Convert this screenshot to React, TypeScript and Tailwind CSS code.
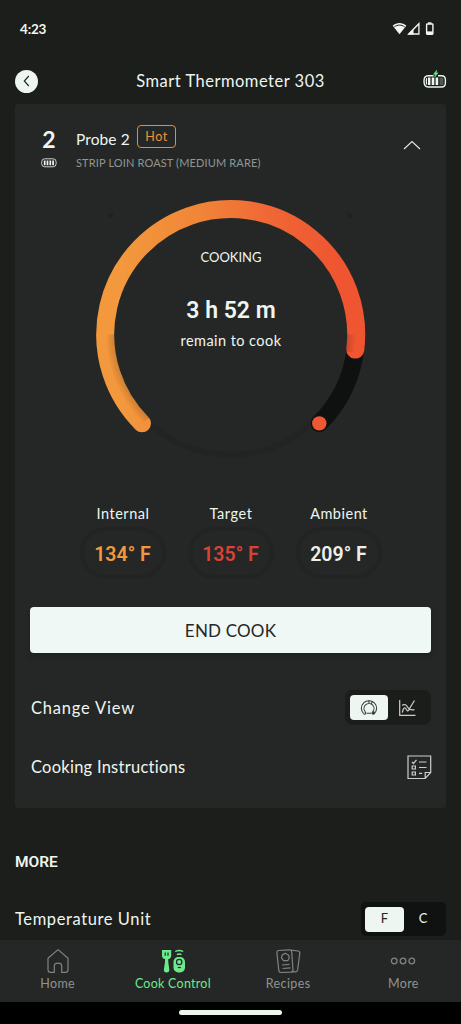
import type { ReactNode } from 'react'

type ReadingProps = {
  label: string
  value: string
  labelClass: string
  valueClass: string
}

type NavItemProps = {
  label: string
  labelClass: string
  children: ReactNode
}

function StatusIcons() {
  return (
    <svg width="44" height="16" viewBox="0 0 44 16" fill="none">
      <path d="M.7 4.800C4.700 1 10.300 1 14.300 4.800L7.500 13.200Z" fill="#f1f8f3" />
      <path d="M2.300 5.900C5.500 3.500 9.500 3.500 12.700 5.900" stroke="#1c1e1b" strokeWidth="1" />
      <path d="M16.700 13 26.900 2.700V13Z" stroke="#f1f8f3" strokeWidth="1.300" />
      <path d="M16 13.600 21.500 8V13.600Z" fill="#f1f8f3" />
      <path d="M36 1.300h3.500v1.500H36z" fill="#f1f8f3" />
      <rect x="34.600" y="3" width="6.300" height="10.300" rx=".7" stroke="#f1f8f3" strokeWidth="1.400" />
      <path d="M34.600 10.400h6.300v3h-6.300z" fill="#f1f8f3" />
    </svg>
  )
}

function ChargingIcon() {
  return (
    <svg width="24" height="19" viewBox="0 0 24 19" fill="none">
      <path d="M10.500 5.700H5.200Q1 5.700 1 11.300T5.200 17H18.500Q22.400 17 22.400 13V9.700Q22.400 5.700 18.500 5.700H15" stroke="#edf6f1" strokeWidth="1.400" />
      <path d="M3.700 8.200Q2.700 11.300 3.700 14.500" stroke="#edf6f1" strokeWidth="1.200" />
      <path d="M5 7.600h2.400v7.500H5zM8.700 7.600h2.600v7.500H8.700zM12.600 7.600h2.600v7.500h-2.600z" fill="#edf6f1" />
      <path d="M16.500 7.600h4v7.500h-4z" fill="#535955" />
      <path d="M13.700.2 10.600 4.300h1.900L11.600 7l3.400-4.100H13z" fill="#6de98d" stroke="#6de98d" strokeWidth=".6" />
    </svg>
  )
}

function BatteryIcon() {
  return (
    <svg width="16" height="10" viewBox="0 0 16 10" fill="none">
      <rect x=".7" y=".8" width="14.400" height="8" rx="3" stroke="#c9d1cc" strokeWidth="1" />
      <path d="M3.700 2.400v4.900M6.500 2.400v4.900M9.300 2.400v4.900M12.100 2.400v4.900" stroke="#edf6f1" strokeWidth="1.700" />
    </svg>
  )
}

function Gauge() {
  return (
    <svg className="col-start-1 row-start-1" width="276" height="264" viewBox="93 197 276 264" fill="none">
      <defs>
        <linearGradient id="heat" gradientUnits="userSpaceOnUse" x1="96" y1="0" x2="365" y2="0">
          <stop offset=".1" stopColor="#f3983c" />
          <stop offset=".38" stopColor="#f08638" />
          <stop offset=".65" stopColor="#f06635" />
          <stop offset=".9" stopColor="#ee5530" />
        </linearGradient>
        <radialGradient id="shade" gradientUnits="userSpaceOnUse" cx="230.700" cy="334.500" r="125">
          <stop offset=".932" stopColor="#000" stopOpacity=".15" />
          <stop offset="1" stopColor="#000" stopOpacity="0" />
        </radialGradient>
      </defs>
      <path d="M108 215.500 113 211.500Q114 217.500 108 217.500ZM353 215.500 348 211.500Q346 217.500 352 217.500Z" fill="#1f2120" />
      <path d="M144 418A120 120 0 0 0 317.400 418" stroke="#222423" strokeWidth="6" />
      <path d="M355.300 349.600A125.500 125.500 0 0 1 319.400 423.300" stroke="#0f1110" strokeWidth="17.500" strokeLinecap="round" />
      <path d="M142 423.300A125.500 125.500 0 1 1 355.300 349.600" stroke="url(#heat)" strokeWidth="18" strokeLinecap="round" />
      <path d="M110 334.500A120.700 120.700 0 0 0 146.500 420.500" stroke="url(#shade)" strokeWidth="8" />
      <path d="M351.200 334.500Q351.300 343 350.200 352" stroke="url(#shade)" strokeWidth="8" />
      <circle cx="319.300" cy="423.400" r="7.200" fill="#ee5832" />
    </svg>
  )
}

function Reading({ label, value, labelClass, valueClass }: ReadingProps) {
  return (
    <div className="flex w-[86px] flex-col items-center">
      <span className={`text-[14.5px] leading-5 text-[#edf6f1] ${labelClass}`}>{label}</span>
      <div className="mt-[3px] flex h-[52px] w-[86px] items-center justify-center rounded-full border-[4px] border-[#222423] pt-[3px] pr-[1px]">
        <span className={`font-['Roboto',sans-serif] text-[19.5px] leading-6 font-semibold whitespace-nowrap ${valueClass}`}>{value}</span>
      </div>
    </div>
  )
}

function NavItem({ label, labelClass, children }: NavItemProps) {
  return (
    <div className="flex w-[115.250px] flex-col items-center pt-[8px]">
      <div className="flex h-[26px] items-center justify-center">{children}</div>
      <span className={`mt-[2px] text-[12.5px] leading-4 whitespace-nowrap ${labelClass}`}>{label}</span>
    </div>
  )
}

export default function App() {
  return (
    <div className="flex h-[1024px] w-[461px] flex-col overflow-hidden bg-[#1c1e1b] font-['Lato',sans-serif] text-[#edf6f1]">
      <div className="flex h-[58px] shrink-0 items-center justify-between pr-[25px] pl-[20px]">
        <span className="text-[13.5px] leading-5 font-bold tracking-[-.2px]">4:23</span>
        <StatusIcons />
      </div>

      <header className="flex h-[46px] shrink-0 items-center justify-between pr-[14px] pl-[15px]">
        <div className="flex size-[23px] items-center justify-center rounded-full bg-[#edf6f1]">
          <svg width="8" height="12" viewBox="0 0 8 12" fill="none" stroke="#252726" strokeWidth="1.200">
            <path d="M5.800 1 1.300 6l4.500 5" />
          </svg>
        </div>
        <h1 className="-mt-[1px] text-[16.5px] leading-6 tracking-[.5px]">Smart Thermometer 303</h1>
        <div className="-mt-[4px]">
          <ChargingIcon />
        </div>
      </header>

      <section className="mr-[15px] ml-[15px] h-[704px] shrink-0 rounded-[4px] bg-[#252726]">
        <div className="flex h-[80px] pt-[20px] pr-[25px] pl-[26px]">
          <div className="flex w-[16px] flex-col items-center">
            <span className="text-[23px] leading-[30px] font-bold">2</span>
            <div className="mt-[4px]">
              <BatteryIcon />
            </div>
          </div>
          <div className="ml-[19px] flex-1">
            <div className="flex h-[25px] items-center">
              <span className="mt-[5px] w-[54px] text-[15.5px] leading-5 tracking-[.1px] whitespace-nowrap">Probe 2</span>
              <span className="ml-[7px] flex h-[23px] w-[39px] items-center justify-center rounded-[4px] border border-[#e98b35] pt-[1px] text-[12.5px] tracking-[.5px] text-[#f0923a]">
                Hot
              </span>
            </div>
            <p className="mt-[6px] text-[11px] leading-4 tracking-[.14px] text-[#929693]">STRIP LOIN ROAST (MEDIUM RARE)</p>
          </div>
          <svg className="mt-[16px]" width="18" height="10" viewBox="0 0 18 10" fill="none" stroke="#dce5df" strokeWidth="1.200">
            <path d="m1 9 8-7.500L17 9" />
          </svg>
        </div>

        <div className="mt-[13px] ml-[78px] grid h-[264px] w-[276px]">
          <Gauge />
          <div className="col-start-1 row-start-1 flex flex-col items-center pt-[50px]">
            <span className="text-[13px] leading-5">COOKING</span>
            <span className="mt-[28px] font-['Roboto',sans-serif] text-[23px] leading-8 font-semibold">3 h 52 m</span>
            <span className="mt-[4px] text-[14.5px] leading-5 tracking-[.45px]">remain to cook</span>
          </div>
        </div>

        <div className="mt-[43px] flex justify-between pr-[64px] pl-[65px]">
          <Reading label="Internal" value="134° F" labelClass="tracking-[.5px]" valueClass="text-[#f3983c]" />
          <Reading label="Target" value="135° F" labelClass="tracking-[.6px]" valueClass="text-[#d94335]" />
          <Reading label="Ambient" value="209° F" labelClass="tracking-[.5px]" valueClass="text-[#edf0ea]" />
        </div>

        <button className="mt-[28px] ml-[15px] flex h-[46px] w-[401px] items-center justify-center rounded-[4px] bg-[#eff8f4] pt-[1px] text-[17px] tracking-[.2px] text-[#252726] shadow-[0_4px_4px_#202221]">
          END COOK
        </button>

        <div className="mt-[37px] flex h-[35px] items-center justify-between pr-[15px] pl-[16px]">
          <span className="text-[16.5px] leading-6 tracking-[.8px]">Change View</span>
          <div className="flex h-[35px] w-[86px] items-center rounded-[7px] bg-[#1b1d1b] pl-[5px]">
            <div className="flex h-[25px] w-[38px] items-center justify-center rounded-[4px] bg-[#edf6f1]">
              <svg width="18" height="18" viewBox="0 0 18 18" fill="none" stroke="#3b3f3d" strokeWidth="1.100">
                <path d="M3.600 14.700A7.600 7.600 0 1 1 14.400 14.700M5.300 12.900A5 5 0 1 1 12.700 12.900" />
                <path d="M3.600 14.700Q5 16 5.600 14.300L5.300 12.900" />
                <path d="M9 1.600V4.200M12.300 2.800 11.200 5M6.500 14.300h5" />
                <circle cx="13.300" cy="14" r="1.200" fill="#3b3f3d" />
              </svg>
            </div>
            <svg className="ml-[10px]" width="19" height="18" viewBox="0 0 19 18" fill="none" stroke="#c9d0cb" strokeWidth="1.200">
              <path d="M1.700 1v15.400H17.500" />
              <path d="M4.300 13.500C5.500 8 7 8 8.500 10.700S11 11.200 12.300 8.300L16.500 1.500" />
              <path d="M4 6.200C8 4.300 8.500 7 10.500 9.300S14 10.600 16.500 10.800" />
            </svg>
          </div>
        </div>

        <div className="mt-[25px] flex h-[34px] items-center justify-between pr-[14px] pl-[16px]">
          <span className="-mt-[1px] text-[16.5px] leading-6 tracking-[.25px]">Cooking Instructions</span>
          <svg width="25" height="25" viewBox="0 0 25 25" fill="none" stroke="#c9d0cb" strokeWidth="1.200">
            <path d="M1 1h22.700v16.500l-5.500 6H1ZM18.200 23.500v-6h5.500" />
            <path d="m5 7 1.500 1.500L9.500 4.800" />
            <path d="M5.200 11h3.200v3H5.200zM5.200 17h3.200v3H5.200zM12 7h7.500M12 12.500h7.500M12 18.300h3.200" />
          </svg>
        </div>
      </section>

      <section className="h-[132px] shrink-0 overflow-hidden pr-[15px] pl-[15px]">
        <h2 className="mt-[42px] font-['Roboto',sans-serif] text-[15.5px] leading-6 font-semibold">MORE</h2>
        <div className="mt-[28px] flex h-[34px] items-center justify-between">
          <span className="text-[16.5px] leading-6 tracking-[.6px]">Temperature Unit</span>
          <div className="flex h-[34px] w-[85px] items-center rounded-[5px] bg-[#101211] pl-[4px] text-[13px]">
            <span className="flex h-[25px] w-[39px] items-center justify-center rounded-[4px] bg-[#edf6f1] text-[#252726]">F</span>
            <span className="flex w-[38px] justify-center">C</span>
          </div>
        </div>
      </section>

      <nav className="flex h-[62px] shrink-0 bg-[#252726] text-[#8f9491]">
        <NavItem label="Home" labelClass="tracking-[.4px]">
          <svg width="24" height="26" viewBox="0 0 24 26" fill="none" stroke="#7f8481" strokeWidth="1.200">
            <path d="M2 10.300 12 1.600l10 8.700v11.500q0 2.600-2.600 2.600H15.700V18q0-2.800-3.700-2.800T8.300 18v6.400H4.600Q2 24.400 2 21.800Z" strokeLinejoin="round" />
          </svg>
        </NavItem>
        <NavItem label="Cook Control" labelClass="tracking-[.25px] text-[#6de98d]">
          <svg width="26" height="26" viewBox="0 0 26 26" fill="none">
            <path d="M2 2h9.200v5.500q0 3-2.900 3.600V14l1 7.500q.3 3-2.700 3T3.900 21.500L5 14v-2.900Q2 10.500 2 7.500Z" fill="#6de98d" />
            <path d="M5.200 4.500v3.200M8 4.500v3.200" stroke="#252726" strokeWidth="1.200" />
            <path d="M15.200 3.500q4-2 8 0M16.900 6.600q2.300-1.200 4.600 0" stroke="#6de98d" strokeWidth="1.300" />
            <rect x="13.500" y="9" width="11.500" height="15.500" rx="4.800" fill="#6de98d" />
            <circle cx="19.200" cy="14" r="2.700" stroke="#252726" strokeWidth="1.200" />
            <path d="M17.700 19.500h3.200" stroke="#252726" strokeWidth="1.200" />
          </svg>
        </NavItem>
        <NavItem label="Recipes" labelClass="tracking-[.4px]">
          <svg width="26" height="26" viewBox="0 0 26 26" fill="none" stroke="#7f8481" strokeWidth="1.200" strokeLinejoin="round">
            <path d="M3.300 2.500 14.500 1.900q2-.1 2.200 2L18 22q.1 2-2 2.200L6 24.500q-2 .1-2.200-2L1.900 4.600Q1.800 2.700 3.300 2.500Z" />
            <path d="m16 2.200 7 .8q2 .3 1.800 2.200L22.600 22q-.3 2-2.300 1.900l-3.500-.2" />
            <path d="M10 5.300 13.500 7l.8 2.700-1.500 3H8.500L6.400 9.900 7.300 7ZM7 17l7.500-.6M7.500 20.500l8-.6" />
          </svg>
        </NavItem>
        <NavItem label="More" labelClass="tracking-[.3px]">
          <svg width="26" height="8" viewBox="0 0 26 8" fill="none" stroke="#7f8481" strokeWidth="1.300">
            <circle cx="4.200" cy="4" r="2.800" />
            <circle cx="13" cy="4" r="2.800" />
            <circle cx="21.800" cy="4" r="2.800" />
          </svg>
        </NavItem>
      </nav>

      <div className="flex h-[22px] shrink-0 justify-center bg-black pt-[8px]">
        <div className="h-[4.500px] w-[103px] rounded-full bg-[#edf6ea]" />
      </div>
    </div>
  )
}
